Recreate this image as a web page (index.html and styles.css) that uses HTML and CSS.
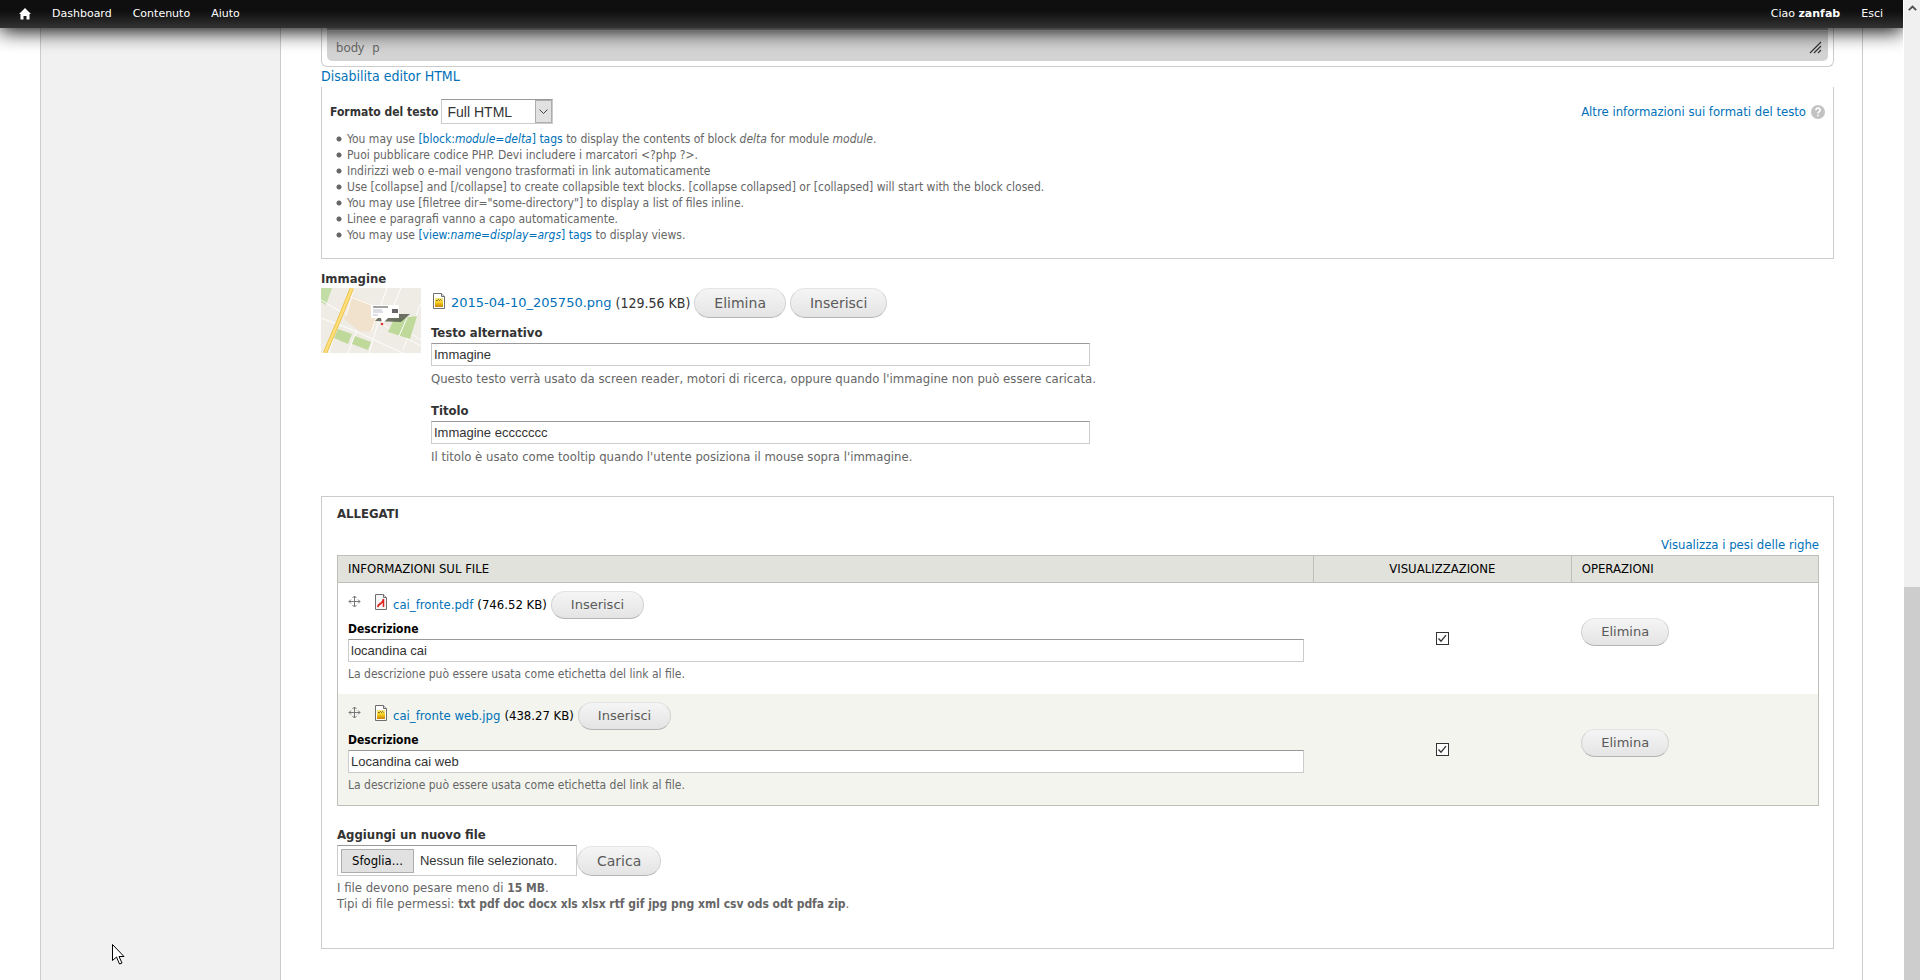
FILE: index.html
```html
<!DOCTYPE html>
<html lang="it">
<head>
<meta charset="utf-8">
<title>Modifica contenuto</title>
<link rel="stylesheet" href="styles.css">
</head>
<body>
<svg class="defs" width="0" height="0" aria-hidden="true">
  <defs>
    <linearGradient id="gold" x1="0" y1="0" x2="0" y2="1">
      <stop offset="0" stop-color="#f7e98a"/><stop offset=".5" stop-color="#f5cf1e"/><stop offset="1" stop-color="#c9820c"/>
    </linearGradient>
    <symbol id="icon-image" viewBox="0 0 12 16">
      <path d="M.5.5h8l3 3v12H.5z" fill="#fff" stroke="#6f6f6f"/>
      <path d="M8.500.5v3h3" fill="#ddd" stroke="#6f6f6f"/>
      <path d="M2 5h8v9H2z" fill="url(#gold)"/>
      <path d="M3 7.500h1.500l1-1 1 1 1-1 1 1" fill="none" stroke="#5c4a10" stroke-width=".8"/>
    </symbol>
    <symbol id="icon-pdf" viewBox="0 0 12 16">
      <path d="M.5.5h8l3 3v12H.5z" fill="#f6f6f6" stroke="#6f6f6f"/>
      <path d="M8.500.5v3h3" fill="#ddd" stroke="#6f6f6f"/>
      <path d="M2.500 11.500c2.500-.8 5-3 6-6.500M8.500 5v8M2.500 13l3-4" fill="none" stroke="#e0201c" stroke-width="1.500"/>
    </symbol>
    <symbol id="icon-move" viewBox="0 0 13 13">
      <path d="M6.500 1v11M1 6.500h11" stroke="#777" fill="none"/>
      <path d="M4.500 3l2-2 2 2M4.500 10l2 2 2-2M3 4.500l-2 2 2 2M10 4.500l2 2-2 2" stroke="#777" fill="none"/>
    </symbol>
  </defs>
</svg>

<div class="window">
  <div class="viewport">
    <nav class="toolbar">
      <a href="#" class="home" aria-label="Home"><svg width="12" height="12" viewBox="0 0 12 12"><path d="M6 0l6 6h-1.500v5.500H7.500V8h-3v3.500h-3V6H0z" fill="#fff"/></svg></a>
      <a href="#">Dashboard</a>
      <a href="#">Contenuto</a>
      <a href="#">Aiuto</a>
      <span class="spacer"></span>
      <a href="#">Ciao <strong>zanfab</strong></a>
      <a href="#">Esci</a>
    </nav>

    <div class="page">
      <aside class="sidebar"></aside>
      <main class="main">
        <div class="editor">
          <div class="editor-bar">
            <a href="#">body</a><a href="#">p</a>
            <svg class="grip" width="13" height="13" viewBox="0 0 13 13"><path d="M1 12L12 1M5 12l7-7M9 12l3-3" stroke="#333" stroke-width="1.200" fill="none"/></svg>
          </div>
        </div>
        <a href="#" class="toggle-editor">Disabilita editor HTML</a>

        <section class="format">
          <div class="format-row">
            <label for="format">Formato del testo</label>
            <span class="select-wrap">
              <select id="format"><option>Full HTML</option></select>
              <span class="select-arrow"><svg width="9" height="6" viewBox="0 0 9 6"><path d="M.5.5l4 4 4-4" stroke="#444" fill="none"/></svg></span>
            </span>
            <a href="#" class="help">Altre informazioni sui formati del testo
              <svg width="14" height="14" viewBox="0 0 14 14"><circle cx="7" cy="7" r="7" fill="#c2c2c2"/><path d="M4.800 5.200c0-3 4.600-2.800 4.400 0C9.100 6.600 7 6.600 7 8.400" stroke="#fff" stroke-width="1.600" fill="none"/><path d="M6.200 9.700h1.600v1.600H6.200z" fill="#fff"/></svg>
            </a>
          </div>
          <ul class="tips">
            <li>You may use <a href="#">[block:<em>module=delta</em>] tags</a> to display the contents of block <em>delta</em> for module <em>module</em>.</li>
            <li>Puoi pubblicare codice PHP. Devi includere i marcatori &lt;?php ?&gt;.</li>
            <li>Indirizzi web o e-mail vengono trasformati in link automaticamente</li>
            <li>Use [collapse] and [/collapse] to create collapsible text blocks. [collapse collapsed] or [collapsed] will start with the block closed.</li>
            <li>You may use [filetree dir="some-directory"] to display a list of files inline.</li>
            <li>Linee e paragrafi vanno a capo automaticamente.</li>
            <li>You may use <a href="#">[view:<em>name=display=args</em>] tags</a> to display views.</li>
          </ul>
        </section>

        <section class="image-field">
          <h2 class="label">Immagine</h2>
          <div class="image-row">
            <svg class="thumb" width="100" height="65" viewBox="0 0 100 65">
              <path d="M0 0h100v65H0z" fill="#efece5"/>
              <path d="M0 0h11L5 17 0 14z" fill="#c3dda6"/>
              <path d="M31 8l21 9 4 14-6 13-12-1-15-12z" fill="#f1e2ce"/>
              <g fill="none" stroke="#fff" stroke-width=".9">
                <path d="M0 30l16 6 16 6 30 14 20 9M27 8l26 10 20 16 27 18M33 0l-8 28M50 44L66 0M60 25L48 65M80 0l-8 20M100 15L82 62M16 38L8 65M36 42l-9 23M0 12l20 12M55 33l45 25"/>
              </g>
              <path d="M73 31l23-3-7 23-22-7z" fill="#bfd99b"/><path d="M86 30l-8 18" stroke="#fff"/>
              <path d="M17 41l14 5-4 10-14-6zM34 48l16 6-3 8-16-6z" fill="#bfd99b"/>
              <path d="M31 0L18 32 4 65" fill="none" stroke="#e8b93c" stroke-width="4"/>
              <path d="M31 0L18 32 4 65" fill="none" stroke="#ffe07a" stroke-width="2.500"/>
              <path d="M54 33l7-7h28l-9 8z" fill="#555c4e" opacity=".85"/>
              <path d="M50 17h28v13H67l-6 6-1-6H50z" fill="#fff"/>
              <path d="M52 19h15" stroke="#444"/><path d="M52 22h9M52 24h10M52 27h5" stroke="#aab" stroke-width=".8"/>
              <path d="M71 21h6v4h-6z" fill="#666"/>
              <circle cx="61" cy="36" r="1.300" fill="#d33"/>
            </svg>
            <div class="image-data">
              <div class="file-row">
                <svg class="file-icon" width="12" height="16"><use href="#icon-image"/></svg>
                <a href="#">2015-04-10_205750.png</a><span class="size">(129.56 KB)</span>
                <button type="button" class="btn">Elimina</button>
                <button type="button" class="btn">Inserisci</button>
              </div>
              <div class="field">
                <label for="alt">Testo alternativo</label>
                <input type="text" id="alt" value="Immagine">
                <p class="hint">Questo testo verrà usato da screen reader, motori di ricerca, oppure quando l'immagine non può essere caricata.</p>
              </div>
              <div class="field">
                <label for="titolo">Titolo</label>
                <input type="text" id="titolo" value="Immagine eccccccc">
                <p class="hint">Il titolo è usato come tooltip quando l'utente posiziona il mouse sopra l'immagine.</p>
              </div>
            </div>
          </div>
        </section>

        <section class="attachments">
          <h2 class="legend">ALLEGATI</h2>
          <a href="#" class="weights">Visualizza i pesi delle righe</a>
          <table class="files">
            <thead>
              <tr><th>INFORMAZIONI SUL FILE</th><th class="col-show">VISUALIZZAZIONE</th><th class="col-ops">OPERAZIONI</th></tr>
            </thead>
            <tbody>
              <tr>
                <td>
                  <div class="file-row">
                    <svg class="move" width="13" height="13"><use href="#icon-move"/></svg>
                    <svg class="file-icon" width="12" height="16"><use href="#icon-pdf"/></svg>
                    <a href="#">cai_fronte.pdf</a><span class="size">(746.52 KB)</span>
                    <button type="button" class="btn">Inserisci</button>
                  </div>
                  <label for="d1">Descrizione</label>
                  <input type="text" id="d1" value="locandina cai">
                  <p class="hint">La descrizione può essere usata come etichetta del link al file.</p>
                </td>
                <td class="col-show"><input type="checkbox" aria-label="Visualizza cai_fronte.pdf" checked></td>
                <td class="col-ops"><button type="button" class="btn">Elimina</button></td>
              </tr>
              <tr>
                <td>
                  <div class="file-row">
                    <svg class="move" width="13" height="13"><use href="#icon-move"/></svg>
                    <svg class="file-icon" width="12" height="16"><use href="#icon-image"/></svg>
                    <a href="#">cai_fronte web.jpg</a><span class="size">(438.27 KB)</span>
                    <button type="button" class="btn">Inserisci</button>
                  </div>
                  <label for="d2">Descrizione</label>
                  <input type="text" id="d2" value="Locandina cai web">
                  <p class="hint">La descrizione può essere usata come etichetta del link al file.</p>
                </td>
                <td class="col-show"><input type="checkbox" aria-label="Visualizza cai_fronte web.jpg" checked></td>
                <td class="col-ops"><button type="button" class="btn">Elimina</button></td>
              </tr>
            </tbody>
          </table>

          <h3 class="label">Aggiungi un nuovo file</h3>
          <div class="upload">
            <label class="picker"><input type="file" class="picker-input"><span class="picker-btn">Sfoglia...</span><span>Nessun file selezionato.</span></label>
            <button type="button" class="btn">Carica</button>
          </div>
          <p class="hint">I file devono pesare meno di <strong>15 MB</strong>.<br>Tipi di file permessi: <strong>txt pdf doc docx xls xlsx rtf gif jpg png xml csv ods odt pdfa zip</strong>.</p>
        </section>
      </main>
    </div>
  </div>

  <div class="scrollbar" aria-hidden="true">
    <svg width="9" height="6" viewBox="0 0 9 6"><path d="M.8 5.200l3.700-3.700 3.700 3.700" stroke="#505050" stroke-width="1.800" fill="none"/></svg>
    <div class="scroll-thumb"></div>
  </div>
</div>

<svg class="cursor" width="13" height="21" viewBox="0 0 13 21" aria-hidden="true"><path d="M.5.5v16l4-3.500 3 7 2.500-1-3-6.500h5z" fill="#fff" stroke="#000"/></svg>
</body>
</html>
```
FILE: styles.css
```css
* { box-sizing: border-box; }

body {
  margin: 0;
  background: #fff;
  color: #333;
  font: 13px/16px "DejaVu Sans Condensed", "DejaVu Sans", sans-serif;
}

a { color: #0071b8; text-decoration: none; }
h2, h3, p, ul { margin: 0; padding: 0; }
svg { display: block; flex: none; }
.defs { position: absolute; }

.window { display: flex; height: 100vh; overflow: hidden; }
.viewport { flex: 1; display: flex; flex-direction: column; min-width: 0; overflow: hidden; }

/* Toolbar */
.toolbar {
  flex: none;
  position: relative;
  z-index: 2;
  display: flex;
  align-items: center;
  gap: 21px;
  height: 28px;
  padding: 0 20px 0 19px;
  background: linear-gradient(#0f0f0f 40%, #333);
  box-shadow: 0 3px 20px #000;
  font: 11px/14px "DejaVu Sans", sans-serif;
}
.toolbar a { color: #fff; }
.spacer { flex: 1; }

/* Page columns */
.page { flex: 1; display: flex; min-height: 0; padding: 0 40px; }
.sidebar {
  flex: none;
  width: 241px;
  background: #f1f1f1;
  border: solid #ccc;
  border-width: 0 1px;
}
.main {
  flex: 1;
  min-width: 0;
  padding: 0 28px 0 40px;
  border-right: 1px solid #ccc;
}

/* Editor footer */
.editor {
  padding: 0 5px 5px;
  border: solid #ccc;
  border-width: 0 1px 1px;
  border-radius: 0 0 6px 6px;
}
.editor-bar {
  display: flex;
  align-items: center;
  gap: 8px;
  height: 33px;
  padding: 6px 6px 0 9px;
  background: linear-gradient(#aaa 2px, #eee 2px 3px, #d3d3d3 3px);
  border-radius: 0 0 5px 5px;
}
.editor-bar a { color: #666; font: 12px/16px "Noto Sans", sans-serif; }
.grip { margin-left: auto; }
.toggle-editor { display: block; padding-bottom: 2px; font-size: 14px; line-height: 18px; }

/* Text format */
.format {
  padding: 12px 8px 15px;
  border: solid #ccc;
  border-width: 0 1px 1px;
}
.format-row { display: flex; align-items: center; gap: 2px; }
.format-row label { font-size: 12px; font-weight: bold; }
.select-wrap { position: relative; display: flex; width: 112px; height: 25px; }
select {
  appearance: none;
  width: 100%;
  padding: 0 20px 0 6px;
  background: #fff;
  color: #333;
  border: 1px solid #ccc;
  border-top-color: #999;
  border-radius: 0;
  font: 14px/18px "Liberation Sans", Arial, sans-serif;
}
.select-arrow {
  position: absolute;
  top: 1px;
  right: 1px;
  bottom: 1px;
  display: flex;
  align-items: center;
  justify-content: center;
  width: 17px;
  background: #e1e1e1;
  border: 1px solid #adadad;
  pointer-events: none;
}
.help { display: flex; align-items: center; gap: 5px; margin-left: auto; }
.tips { margin: 7px 0 0 6px; color: #666; font-size: 12px; list-style: none; }
.tips li {
  padding-left: 11px;
  background: radial-gradient(circle, #666 2px, transparent 3px) 0 5px / 6px 6px no-repeat;
}

/* Shared form pieces */
.label, label { display: block; color: #333; font-size: 13px; font-weight: bold; line-height: 16px; }
input[type="text"] {
  display: block;
  width: 100%;
  height: 23px;
  padding: 1px 2px;
  background: #fff;
  color: #333;
  border: 1px solid #ccc;
  border-top-color: #999;
  font: 13px/16px "Liberation Sans", Arial, sans-serif;
}
.hint { color: #666; }
.hint strong { font-size: 12px; }
.btn {
  height: 30px;
  padding: 0 19px;
  background: linear-gradient(#f5f5f5, #e4e4e4);
  color: #5a5a5a;
  border: 1px solid #d2d2d2;
  border-color: #e4e4e4 #d2d2d2 #b4b4b4;
  border-radius: 16px;
  font: 14px/18px "DejaVu Sans", sans-serif;
}
.file-row { display: flex; align-items: center; }
.file-icon { align-self: flex-start; margin-right: 6px; }
.size { margin: 0 4px; }

/* Image field */
.image-field { margin-top: 12px; }
.label { padding-bottom: 1px; }
.image-row { display: flex; gap: 10px; }
.image-data { width: 659px; }
.image-data .file-row { font-size: 14px; }
.image-data .file-row a { font-family: "DejaVu Sans", sans-serif; font-size: 13px; }
.image-data .file-icon { margin: 5px 6px 0 2px; }
.image-data .btn + .btn { margin-left: 4px; }
.field { padding-top: 7px; }
.field .hint { padding: 5px 0 9px; white-space: nowrap; }
.field label { padding-bottom: 2px; }

/* Attachments */
.attachments {
  margin-top: 22px;
  padding: 9px 14px 36px 15px;
  border: 1px solid #ccc;
}
.legend { font-size: 13px; line-height: 16px; }
.weights { display: block; margin: 15px 0 2px; text-align: right; }
.files { width: 100%; border-collapse: collapse; border: 1px solid #bebfb9; color: #000; }
.files th {
  height: 27px;
  padding: 0 10px;
  background: #e1e2dc;
  border: 1px solid #bebfb9;
  font-weight: normal;
  text-align: left;
}
.files td { padding: 8px 10px 12px; vertical-align: middle; }
.files tbody tr:nth-child(even) { background: #f3f4ee; }
.files .col-show { width: 17.4%; text-align: center; }
.files .col-ops { width: 16.7%; }
.files td.col-show { padding: 8px 10px; }
.files td.col-ops { padding: 2px 10px 16px; }
.files .btn { height: 28px; font-size: 13px; }
.files td label { padding: 2px 0; color: #000; font-size: 12px; }
.files .hint { padding-top: 4px; font-size: 12px; }
.files .move { align-self: flex-start; margin: 4px 14px 0 0; }
.files .file-icon { margin-top: 3px; }
input[type="checkbox"] {
  appearance: none;
  display: block;
  width: 13px;
  height: 13px;
  margin: 0 auto;
  background: #fff url("data:image/svg+xml,%3Csvg xmlns='http://www.w3.org/2000/svg' viewBox='0 0 11 11'%3E%3Cpath d='M1.500 5.500l2.500 2.700 5-6' fill='none' stroke='%23333' stroke-width='1.300'/%3E%3C/svg%3E") center / 11px 11px no-repeat;
  border: 1px solid #333;
}

/* Upload */
.attachments .label { margin-top: 21px; padding-bottom: 2px; }
.upload { display: flex; align-items: center; }
.picker {
  display: flex;
  align-items: center;
  gap: 6px;
  width: 240px;
  height: 31px;
  padding: 0 4px 0 3px;
  border: 1px solid #ccc;
  border-top-color: #999;
  font: 13px/16px "Liberation Sans", Arial, sans-serif;
}
.picker-input { position: absolute; width: 1px; height: 1px; opacity: 0; }
.picker-btn {
  padding: 3px 10px;
  background: #e1e1e1;
  color: #000;
  border: 1px solid #adadad;
  font: 13px/16px "DejaVu Sans Condensed", sans-serif;
}
.upload + .hint { padding-top: 4px; }

/* Scrollbar */
.scrollbar {
  flex: none;
  display: flex;
  flex-direction: column;
  align-items: center;
  width: 17px;
  padding-top: 5px;
  background: #f0f0f0;
  border-left: 1px solid #fff;
}
.scroll-thumb { width: 100%; height: 40.3%; margin-top: auto; background: #cdcdcd; }

.cursor { position: absolute; left: 112px; top: 944px; z-index: 3; }
```
